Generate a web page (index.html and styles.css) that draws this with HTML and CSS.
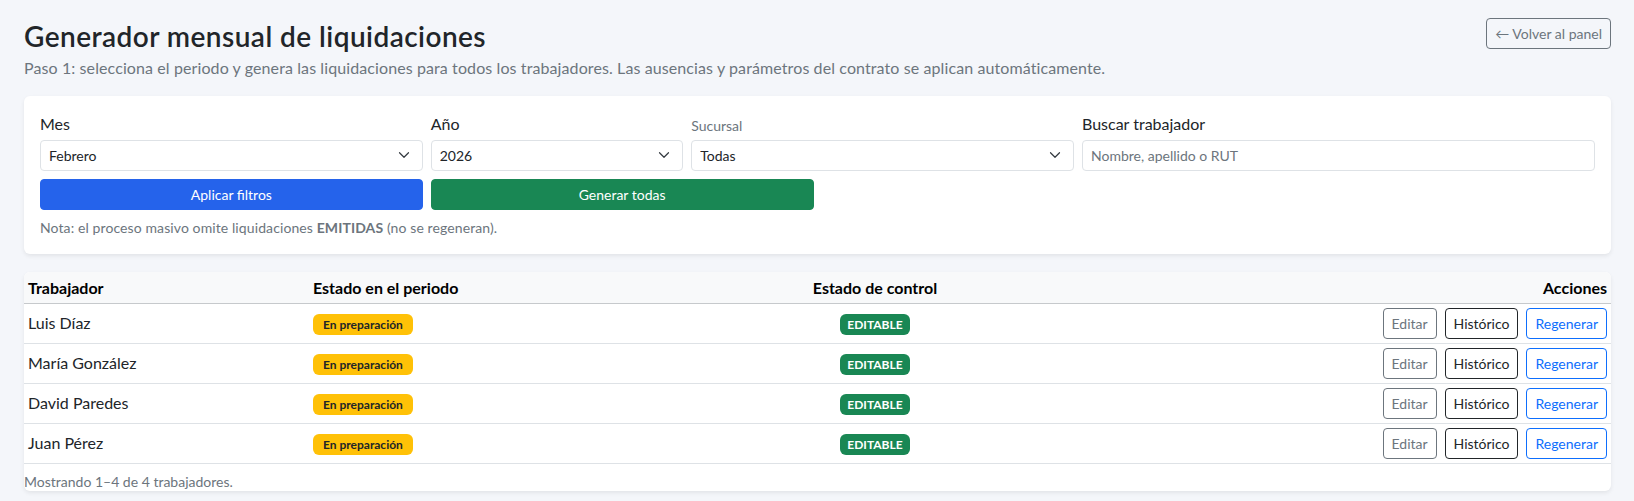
FILE: index.html
```html
<!DOCTYPE html>
<html lang="es">
  <head>
    <meta charset="UTF-8">
    <meta name="viewport" content="width=device-width, initial-scale=1.0"/>
    <title>Generador mensual de liquidaciones</title>
    <link rel="stylesheet" href="styles.css">
  </head>
  <body>
    <div class="page">
      <header class="page-head">
        <div>
          <h1 class="page-title">Generador mensual de liquidaciones</h1>
          <p class="page-sub">Paso 1: selecciona el periodo y genera las liquidaciones para todos los trabajadores. Las ausencias y parámetros del contrato se aplican automáticamente.</p>
        </div>
        <a href="#" class="btn btn-outline-secondary btn-back">&larr; Volver al panel</a>
      </header>

      <section class="card filters">
        <form class="filter-grid" action="">
          <div class="field span-3">
            <label for="mes">Mes</label>
            <div class="select-wrap">
              <select id="mes" class="form-select">
                <option>Febrero</option>
              </select>
              <svg class="chevron" viewBox="0 0 16 16"><path d="M2 5l6 6 6-6"/></svg>
            </div>
          </div>
          <div class="field span-2">
            <label for="anio">Año</label>
            <div class="select-wrap">
              <select id="anio" class="form-select">
                <option>2026</option>
              </select>
              <svg class="chevron" viewBox="0 0 16 16"><path d="M2 5l6 6 6-6"/></svg>
            </div>
          </div>
          <div class="field span-3">
            <label for="sucursal" class="label-muted">Sucursal</label>
            <div class="select-wrap">
              <select id="sucursal" class="form-select">
                <option>Todas</option>
              </select>
              <svg class="chevron" viewBox="0 0 16 16"><path d="M2 5l6 6 6-6"/></svg>
            </div>
          </div>
          <div class="field span-4">
            <label for="buscar">Buscar trabajador</label>
            <input type="text" id="buscar" class="form-input" placeholder="Nombre, apellido o RUT" />
          </div>

          <div class="span-3">
            <button type="submit" class="btn btn-block btn-blue">Aplicar filtros</button>
          </div>
          <div class="span-3">
            <button type="button" class="btn btn-block btn-green">Generar todas</button>
          </div>
        </form>
        <p class="note">Nota: el proceso masivo omite liquidaciones <strong>EMITIDAS</strong> (no se regeneran).</p>
      </section>

      <section class="card table-card">
        <table class="workers">
          <colgroup>
            <col class="col-name">
            <col class="col-state">
            <col class="col-control">
            <col>
          </colgroup>
          <thead>
            <tr>
              <th>Trabajador</th>
              <th>Estado en el periodo</th>
              <th class="center">Estado de control</th>
              <th class="right">Acciones</th>
            </tr>
          </thead>
          <tbody>
            <tr>
              <td>Luis Díaz</td>
              <td><span class="badge badge-warning">En preparación</span></td>
              <td class="center"><span class="badge badge-success">EDITABLE</span></td>
              <td>
                <div class="actions">
                  <button class="btn btn-outline-secondary">Editar</button>
                  <button class="btn btn-outline-dark">Histórico</button>
                  <button class="btn btn-outline-primary">Regenerar</button>
                </div>
              </td>
            </tr>
            <tr>
              <td>María González</td>
              <td><span class="badge badge-warning">En preparación</span></td>
              <td class="center"><span class="badge badge-success">EDITABLE</span></td>
              <td>
                <div class="actions">
                  <button class="btn btn-outline-secondary">Editar</button>
                  <button class="btn btn-outline-dark">Histórico</button>
                  <button class="btn btn-outline-primary">Regenerar</button>
                </div>
              </td>
            </tr>
            <tr>
              <td>David Paredes</td>
              <td><span class="badge badge-warning">En preparación</span></td>
              <td class="center"><span class="badge badge-success">EDITABLE</span></td>
              <td>
                <div class="actions">
                  <button class="btn btn-outline-secondary">Editar</button>
                  <button class="btn btn-outline-dark">Histórico</button>
                  <button class="btn btn-outline-primary">Regenerar</button>
                </div>
              </td>
            </tr>
            <tr>
              <td>Juan Pérez</td>
              <td><span class="badge badge-warning">En preparación</span></td>
              <td class="center"><span class="badge badge-success">EDITABLE</span></td>
              <td>
                <div class="actions">
                  <button class="btn btn-outline-secondary">Editar</button>
                  <button class="btn btn-outline-dark">Histórico</button>
                  <button class="btn btn-outline-primary">Regenerar</button>
                </div>
              </td>
            </tr>
          </tbody>
        </table>
        <div class="table-foot">Mostrando 1–4 de 4 trabajadores.</div>
      </section>
    </div>
  </body>
</html>
```

FILE: styles.css
```css
*
{
  box-sizing: border-box;
}

body
{
  margin: 0;
  background: #f4f6fa;
  color: #212529;
  font-family: "Segoe UI", Lato, "Liberation Sans", sans-serif;
  font-size: 16px;
  line-height: 1.5;
}

.page
{
  padding: 20px 23px 9px 24px;
}

/* header */

.page-head
{
  display: flex;
  justify-content: space-between;
  align-items: flex-start;
  margin-bottom: 14px;
}

.page-title
{
  margin: 0 0 2px;
  font-size: 28px;
  font-weight: 600;
  line-height: 1.2;
  letter-spacing: 0.45px;
}

.page-sub
{
  margin: 0 0 2px;
  color: #6c757d;
  letter-spacing: 0.1px;
}

.btn-back
{
  margin-top: -2px;
  text-decoration: none;
}

/* cards */

.card
{
  background: #fff;
  border-radius: 6px;
  box-shadow: 0 2px 4px rgba(0, 0, 0, 0.075);
}

.filters
{
  padding: 16px;
  margin-bottom: 18px;
}

.filter-grid
{
  display: grid;
  grid-template-columns: repeat(12, 1fr);
  gap: 8px;
  align-items: end;
}

.span-2 { grid-column: span 2; }
.span-3 { grid-column: span 3; }
.span-4 { grid-column: span 4; }

.field label
{
  display: block;
  margin-bottom: 4px;
}

.field .label-muted
{
  font-size: 14px;
  line-height: 21px;
  color: #6c757d;
}

.select-wrap
{
  position: relative;
}

.form-select,
.form-input
{
  display: block;
  width: 100%;
  height: 31px;
  padding: 4px 30px 4px 8px;
  border: 1px solid #dee2e6;
  border-radius: 4px;
  background: #fff;
  color: #212529;
  font-family: inherit;
  font-size: 14px;
  -webkit-appearance: none;
  appearance: none;
}

.form-input
{
  padding-right: 8px;
}

.form-input::placeholder
{
  color: #6c757d;
}

.chevron
{
  position: absolute;
  right: 13px;
  top: 9px;
  width: 12px;
  height: 12px;
  fill: none;
  stroke: #343a40;
  stroke-width: 1.6;
  stroke-linecap: round;
  stroke-linejoin: round;
  pointer-events: none;
}

.note
{
  margin: 8px 0 0;
  font-size: 14px;
  line-height: 20px;
  color: #6c757d;
  letter-spacing: 0.1px;
}

/* buttons */

.btn
{
  display: inline-block;
  padding: 4px 8px;
  border: 1px solid transparent;
  border-radius: 4px;
  background: transparent;
  font-family: inherit;
  font-size: 14px;
  line-height: 21px;
  text-align: center;
  cursor: pointer;
}

.btn-block
{
  display: block;
  width: 100%;
}

.btn-blue
{
  background: #2563eb;
  border-color: #2563eb;
  color: #fff;
}

.btn-green
{
  background: #198754;
  border-color: #198754;
  color: #fff;
}

.btn-outline-secondary
{
  border-color: #6c757d;
  color: #6c757d;
}

.btn-outline-dark
{
  border-color: #212529;
  color: #212529;
}

.btn-outline-primary
{
  border-color: #0d6efd;
  color: #0d6efd;
}

/* table */

.table-card
{
  overflow: hidden;
}

.workers
{
  width: 100%;
  border-collapse: collapse;
  table-layout: fixed;
}

.col-name { width: 285px; }
.col-state { width: 411px; }
.col-control { width: 310px; }

.workers th
{
  padding: 4px;
  background: #f8f9fa;
  color: #000;
  font-weight: 700;
  text-align: left;
  line-height: 23px;
  border-bottom: 1px solid #c6c9cc;
}

.workers td
{
  padding: 4px;
  vertical-align: middle;
  border-bottom: 1px solid #dee2e6;
}

.workers .center
{
  text-align: center;
}

.workers .right
{
  text-align: right;
}

.actions
{
  display: flex;
  justify-content: flex-end;
  gap: 8px;
}

.badge
{
  display: inline-block;
  padding: 4px 8px;
  border-radius: 6px;
  font-size: 12px;
  font-weight: 700;
  line-height: 13px;
  vertical-align: middle;
}

.badge-warning
{
  padding: 4px 10px;
  background: #ffc107;
  color: #212529;
}

.badge-success
{
  padding: 4px 7px;
  background: #198754;
  color: #fff;
}

.table-foot
{
  padding: 8px 0 0;
  font-size: 14px;
  line-height: 19px;
  color: #6c757d;
}
```
